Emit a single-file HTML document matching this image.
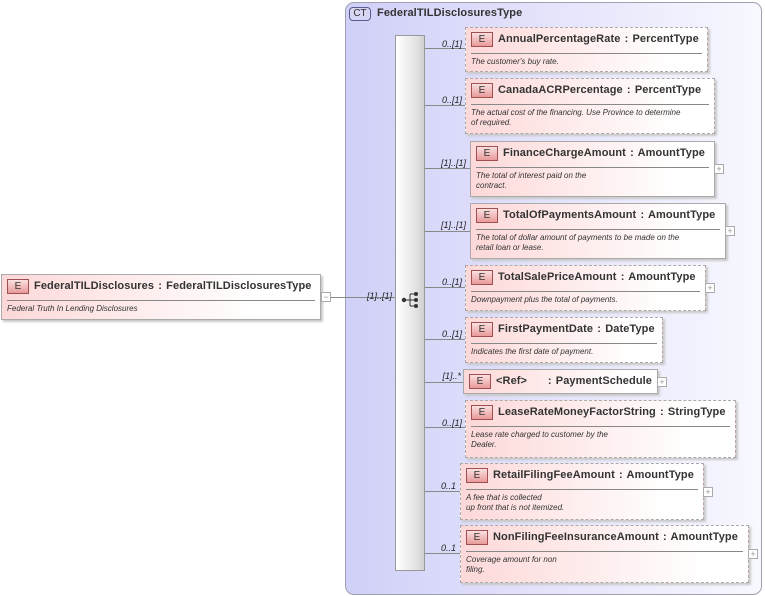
<!DOCTYPE html>
<html><head><meta charset="utf-8"><style>
*{margin:0;padding:0;box-sizing:border-box}
body{width:765px;height:596px;background:#fff;position:relative;overflow:hidden;font-family:"Liberation Sans",Arial,sans-serif}
.ct{position:absolute;left:345px;top:2px;width:417px;height:593px;border:1px solid #a0a0b0;border-radius:9px;background:linear-gradient(90deg,#d0d0f8 0%,#e2e2fb 45%,#f8f8ff 100%)}
.ctb{position:absolute;left:349px;top:7px;width:22px;height:14px;border:1px solid #5a5a90;border-radius:4px;background:#d6d6f4;font-size:10px;line-height:12px;text-align:center;color:#333}
.ctt{position:absolute;left:377px;top:7px;font-size:11px;font-weight:bold;color:#333;letter-spacing:0.1px}
.seq{position:absolute;left:395px;top:35px;width:30px;height:536px;border:1px solid #999;background:linear-gradient(90deg,#fff,#e4e4e4 70%,#d0d0d0)}
.ln{position:absolute;height:1px;background:#888}
.lb{position:absolute;font-size:9px;font-style:italic;color:#222;text-align:right}
.el{position:absolute;background:linear-gradient(90deg,#fdd8d8,#fff 85%);box-shadow:2px 2px 2px #c8c8c8}
.el.s{border:1px solid #aaa}
.el.d{border:1px dashed #aaa}
.eb{position:absolute;left:5px;top:4px;width:22px;height:15px;border:1px solid #a05050;background:linear-gradient(#fbe0e0,#e89a9a);font-size:10px;line-height:13px;text-align:center;color:#333}
.en{position:absolute;left:32px;top:4px;font-size:11px;font-weight:bold;color:#333;white-space:nowrap;line-height:14px;letter-spacing:0.1px;word-spacing:1px}
.sep{position:absolute;left:5px;right:5px;top:25px;height:1px;background:#888}
.ds{position:absolute;left:5px;top:29px;font-size:8px;font-style:italic;color:#333;line-height:10px;white-space:nowrap}
.pl{position:absolute;width:10px;height:10px;border:1px solid #aaa;background:#fff;font-size:9px;line-height:8px;text-align:center;color:#999}
</style></head><body>
<div class="ct"></div>
<div class="ctb">CT</div><div class="ctt">FederalTILDisclosuresType</div>

<div class="el s" style="left:1px;top:274px;width:320px;height:46px;background:linear-gradient(90deg,#fdd8d8,#fff 80%)"><div class="eb">E</div><div class="en">FederalTILDisclosures : FederalTILDisclosuresType</div><div class="sep"></div><div class="ds">Federal Truth In Lending Disclosures</div></div>
<div class="pl" style="left:321px;top:292px">−</div>
<div class="ln" style="left:331px;top:297px;width:64px"></div>
<div class="lb" style="left:350px;top:291px;width:42px">[1]..[1]</div>

<div class="seq"></div>
<svg style="position:absolute;left:401px;top:291px" width="20" height="18"><circle cx="3" cy="9" r="2.2" fill="#333"/><line x1="3" y1="9" x2="9" y2="9" stroke="#333"/><line x1="9" y1="3" x2="9" y2="15" stroke="#333"/><line x1="9" y1="3" x2="14" y2="3" stroke="#333"/><line x1="9" y1="9" x2="14" y2="9" stroke="#333"/><line x1="9" y1="15" x2="14" y2="15" stroke="#333"/><circle cx="15" cy="3" r="2" fill="#333"/><circle cx="15" cy="9" r="2" fill="#333"/><circle cx="15" cy="15" r="2" fill="#333"/></svg>

<div class="ln" style="left:425px;top:48px;width:40px"></div><div class="lb" style="left:420px;top:39px;width:42px">0..[1]</div>
<div class="el d" style="left:465px;top:27px;width:243px;height:45px"><div class="eb">E</div><div class="en">AnnualPercentageRate : PercentType</div><div class="sep"></div><div class="ds">The customer's buy rate.</div></div>

<div class="ln" style="left:425px;top:105px;width:40px"></div><div class="lb" style="left:420px;top:95px;width:42px">0..[1]</div>
<div class="el d" style="left:465px;top:78px;width:250px;height:56px"><div class="eb">E</div><div class="en">CanadaACRPercentage : PercentType</div><div class="sep"></div><div class="ds">The actual cost of the financing. Use Province to determine<br>of required.</div></div>

<div class="ln" style="left:425px;top:168px;width:45px"></div><div class="lb" style="left:424px;top:158px;width:42px">[1]..[1]</div>
<div class="el s" style="left:470px;top:141px;width:245px;height:56px"><div class="eb">E</div><div class="en">FinanceChargeAmount : AmountType</div><div class="sep"></div><div class="ds">The total of interest paid on the<br>contract.</div></div>
<div class="pl" style="left:714px;top:164px">+</div>

<div class="ln" style="left:425px;top:231px;width:45px"></div><div class="lb" style="left:424px;top:220px;width:42px">[1]..[1]</div>
<div class="el s" style="left:470px;top:203px;width:256px;height:56px"><div class="eb">E</div><div class="en">TotalOfPaymentsAmount : AmountType</div><div class="sep"></div><div class="ds">The total of dollar amount of payments to be made on the<br>retail loan or lease.</div></div>
<div class="pl" style="left:725px;top:226px">+</div>

<div class="ln" style="left:425px;top:287px;width:40px"></div><div class="lb" style="left:420px;top:277px;width:42px">0..[1]</div>
<div class="el d" style="left:465px;top:265px;width:241px;height:46px"><div class="eb">E</div><div class="en">TotalSalePriceAmount : AmountType</div><div class="sep"></div><div class="ds">Downpayment plus the total of payments.</div></div>
<div class="pl" style="left:705px;top:283px">+</div>

<div class="ln" style="left:425px;top:339px;width:40px"></div><div class="lb" style="left:420px;top:329px;width:42px">0..[1]</div>
<div class="el d" style="left:465px;top:317px;width:198px;height:46px"><div class="eb">E</div><div class="en">FirstPaymentDate : DateType</div><div class="sep"></div><div class="ds">Indicates the first date of payment.</div></div>

<div class="ln" style="left:425px;top:382px;width:38px"></div><div class="lb" style="left:419px;top:371px;width:42px">[1]..*</div>
<div class="el s" style="left:463px;top:369px;width:195px;height:25px"><div class="eb">E</div><div class="en">&lt;Ref&gt;&nbsp;&nbsp;&nbsp;&nbsp; : PaymentSchedule</div></div>
<div class="pl" style="left:657px;top:377px">+</div>

<div class="ln" style="left:425px;top:427px;width:40px"></div><div class="lb" style="left:420px;top:418px;width:42px">0..[1]</div>
<div class="el d" style="left:465px;top:400px;width:271px;height:58px"><div class="eb">E</div><div class="en">LeaseRateMoneyFactorString : StringType</div><div class="sep"></div><div class="ds">Lease rate charged to customer by the<br>Dealer.</div></div>

<div class="ln" style="left:425px;top:491px;width:35px"></div><div class="lb" style="left:414px;top:481px;width:42px">0..1</div>
<div class="el d" style="left:460px;top:463px;width:244px;height:57px"><div class="eb">E</div><div class="en">RetailFilingFeeAmount : AmountType</div><div class="sep"></div><div class="ds">A fee that is collected<br>up front that is not itemized.</div></div>
<div class="pl" style="left:703px;top:487px">+</div>

<div class="ln" style="left:425px;top:553px;width:35px"></div><div class="lb" style="left:414px;top:543px;width:42px">0..1</div>
<div class="el d" style="left:460px;top:525px;width:289px;height:58px"><div class="eb">E</div><div class="en">NonFilingFeeInsuranceAmount : AmountType</div><div class="sep"></div><div class="ds">Coverage amount for non<br>filing.</div></div>
<div class="pl" style="left:748px;top:549px">+</div>
</body></html>
